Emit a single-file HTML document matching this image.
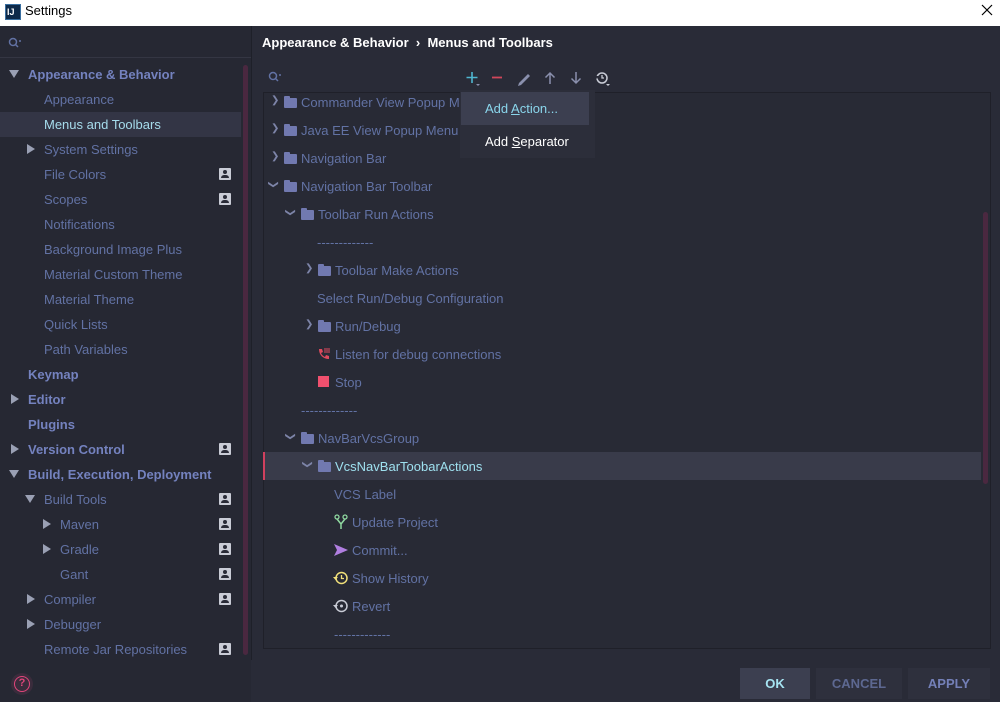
<!DOCTYPE html>
<html><head><meta charset="utf-8"><style>
*{margin:0;padding:0;box-sizing:border-box}
body{width:1000px;height:702px;background:#292b37;font-family:"Liberation Sans","Noto Sans CJK SC",sans-serif;font-size:13px;color:#6272a4;position:relative;overflow:hidden}
.a{position:absolute;white-space:nowrap;line-height:18px}
.b{font-weight:bold;color:#7482bf}
.ic{position:absolute;width:12px;height:12px;background:#c9ccd6;border-radius:1px}
.ic:before{content:"";position:absolute;left:4px;top:2px;width:4px;height:4px;border-radius:50%;background:#292b37}
.ic:after{content:"";position:absolute;left:2px;top:7px;width:8px;height:3px;border-radius:3px 3px 0 0;background:#292b37}
.tri{position:absolute;width:0;height:0}
.td{border-left:5px solid transparent;border-right:5px solid transparent;border-top:8px solid #9aa0b4}
.tr{border-top:5px solid transparent;border-bottom:5px solid transparent;border-left:8px solid #9aa0b4}
.fold{position:absolute;width:13px;height:10px;background:#7179b0;border-radius:1px}
.fold:before{content:"";position:absolute;left:0;top:-2px;width:6px;height:3px;background:#7179b0;border-radius:1px 1px 0 0}
.chev{position:absolute;color:#7d84a8;font-size:10px}
</style></head><body>
<div class="a" style="left:0;top:0;width:1000px;height:26px;background:#fff"></div>
<div class="a" style="left:5px;top:4px;width:16px;height:16px;background:#0e2a4a;border:1px solid #3a6fa0"></div>
<div class="a" style="left:7px;top:3px;color:#fff;font-size:9px;font-weight:bold">IJ</div>
<div class="a" style="left:25px;top:2px;color:#000;font-size:13px">Settings</div>
<svg class="a" style="left:981px;top:4px" width="12" height="12"><path d="M1 1l10 10M11 1L1 11" stroke="#000" stroke-width="1.2"/></svg>

<div class="a" style="left:0;top:26px;width:251px;height:676px;background:#262833"></div>
<div class="a" style="left:251px;top:26px;width:1px;height:634px;background:#1e2029"></div>
<div class="a" style="left:0;top:57px;width:251px;height:1px;background:#343643"></div>
<svg class="a" style="left:8px;top:37px" width="14" height="12"><circle cx="5" cy="5" r="3.5" stroke="#6272a4" stroke-width="1.5" fill="none"/><path d="M7.5 7.5L10 10M11 4l2 0" stroke="#6272a4" stroke-width="1.5"/></svg>
<div class="a" style="left:243px;top:65px;width:5px;height:590px;background:#4a2840;border-radius:3px"></div>
<div class="a" style="left:0;top:112px;width:241px;height:25px;background:#333545"></div>

<div class="tri td" style="left:9px;top:70px"></div><div class="a b" style="left:28px;top:66px">Appearance &amp; Behavior</div>
<div class="a" style="left:44px;top:91px">Appearance</div>
<div class="a" style="left:44px;top:116px;color:#a6dcec">Menus and Toolbars</div>
<div class="tri tr" style="left:27px;top:144px"></div><div class="a" style="left:44px;top:141px">System Settings</div>
<div class="a" style="left:44px;top:166px">File Colors</div><div class="ic" style="left:219px;top:168px"></div>
<div class="a" style="left:44px;top:191px">Scopes</div><div class="ic" style="left:219px;top:193px"></div>
<div class="a" style="left:44px;top:216px">Notifications</div>
<div class="a" style="left:44px;top:241px">Background Image Plus</div>
<div class="a" style="left:44px;top:266px">Material Custom Theme</div>
<div class="a" style="left:44px;top:291px">Material Theme</div>
<div class="a" style="left:44px;top:316px">Quick Lists</div>
<div class="a" style="left:44px;top:341px">Path Variables</div>
<div class="a b" style="left:28px;top:366px">Keymap</div>
<div class="tri tr" style="left:11px;top:394px"></div><div class="a b" style="left:28px;top:391px">Editor</div>
<div class="a b" style="left:28px;top:416px">Plugins</div>
<div class="tri tr" style="left:11px;top:444px"></div><div class="a b" style="left:28px;top:441px">Version Control</div><div class="ic" style="left:219px;top:443px"></div>
<div class="tri td" style="left:9px;top:470px"></div><div class="a b" style="left:28px;top:466px">Build, Execution, Deployment</div>
<div class="tri td" style="left:25px;top:495px"></div><div class="a" style="left:44px;top:491px">Build Tools</div><div class="ic" style="left:219px;top:493px"></div>
<div class="tri tr" style="left:43px;top:519px"></div><div class="a" style="left:60px;top:516px">Maven</div><div class="ic" style="left:219px;top:518px"></div>
<div class="tri tr" style="left:43px;top:544px"></div><div class="a" style="left:60px;top:541px">Gradle</div><div class="ic" style="left:219px;top:543px"></div>
<div class="a" style="left:60px;top:566px">Gant</div><div class="ic" style="left:219px;top:568px"></div>
<div class="tri tr" style="left:27px;top:594px"></div><div class="a" style="left:44px;top:591px">Compiler</div><div class="ic" style="left:219px;top:593px"></div>
<div class="tri tr" style="left:27px;top:619px"></div><div class="a" style="left:44px;top:616px">Debugger</div>
<div class="a" style="left:44px;top:641px">Remote Jar Repositories</div><div class="ic" style="left:219px;top:643px"></div>
<div class="a" style="left:11px;top:673px;width:22px;height:22px;border-radius:50%;background:#3a2c3c"></div>
<div class="a" style="left:14px;top:676px;width:16px;height:16px;border-radius:50%;border:1.5px solid #e0457b;color:#e0457b;font-size:11px;line-height:13px;text-align:center;font-weight:bold">?</div>

<div class="a" style="left:262px;top:34px;color:#fff;font-weight:bold">Appearance &amp; Behavior &nbsp;›&nbsp; Menus and Toolbars</div>
<svg class="a" style="left:268px;top:71px" width="14" height="12"><circle cx="5" cy="5" r="3.5" stroke="#6272a4" stroke-width="1.5" fill="none"/><path d="M7.5 7.5L10 10M11 4l2 0" stroke="#6272a4" stroke-width="1.5"/></svg>
<svg class="a" style="left:464px;top:70px" width="150" height="18">
<path d="M8 2v11M2.5 7.5h11" stroke="#4fb6d0" stroke-width="1.6"/><path d="M12 14l2 2 2-2z" fill="#8a90ad"/>
<path d="M28 7.5h10" stroke="#d0465a" stroke-width="1.8"/>
<path d="M55 13l9-9 2 2-9 9-3 1z" fill="#8a90ad"/>
<path d="M86 14V3M81.5 7.5L86 3l4.5 4.5" stroke="#8a90ad" stroke-width="1.5" fill="none"/>
<path d="M112 2v11M107.5 8.5L112 13l4.5-4.5" stroke="#8a90ad" stroke-width="1.5" fill="none"/>
<circle cx="138" cy="8" r="5" stroke="#c9ccd6" stroke-width="1.5" fill="none"/><path d="M138 5v3h2" stroke="#c9ccd6" stroke-width="1.3" fill="none"/><path d="M131 6l2 3 2-3z" fill="#292b37"/><path d="M142 14l2 2 2-2z" fill="#c9ccd6"/>
</svg>

<div class="a" style="left:263px;top:92px;width:728px;height:557px;border:1px solid #1f2029;background:#282a35"></div>
<div class="a" style="left:983px;top:212px;width:5px;height:272px;background:#4a2840;border-radius:3px"></div>
<div class="a" style="left:263px;top:452px;width:718px;height:28px;background:#393b4a"></div>
<div class="a" style="left:263px;top:452px;width:2px;height:28px;background:#d0405e"></div>

<div class="chev" style="left:271px;top:95px">❯</div><div class="fold" style="left:284px;top:98px"></div><div class="a" style="left:301px;top:94px">Commander View Popup M</div>
<div class="chev" style="left:271px;top:123px">❯</div><div class="fold" style="left:284px;top:126px"></div><div class="a" style="left:301px;top:122px">Java EE View Popup Menu</div>
<div class="chev" style="left:271px;top:151px">❯</div><div class="fold" style="left:284px;top:154px"></div><div class="a" style="left:301px;top:150px">Navigation Bar</div>
<div class="chev" style="left:269px;top:179px;transform:rotate(90deg)">❯</div><div class="fold" style="left:284px;top:182px"></div><div class="a" style="left:301px;top:178px">Navigation Bar Toolbar</div>
<div class="chev" style="left:286px;top:207px;transform:rotate(90deg)">❯</div><div class="fold" style="left:301px;top:210px"></div><div class="a" style="left:318px;top:206px">Toolbar Run Actions</div>
<div class="a" style="left:317px;top:234px">-------------</div>
<div class="chev" style="left:305px;top:263px">❯</div><div class="fold" style="left:318px;top:266px"></div><div class="a" style="left:335px;top:262px">Toolbar Make Actions</div>
<div class="a" style="left:317px;top:290px">Select Run/Debug Configuration</div>
<div class="chev" style="left:305px;top:319px">❯</div><div class="fold" style="left:318px;top:322px"></div><div class="a" style="left:335px;top:318px">Run/Debug</div>
<svg class="a" style="left:317px;top:347px" width="14" height="14"><path d="M2 2h3l1 3-2 1c1 2 2 3 4 4l1-2 3 1v3c-6 0-10-4-10-10z" fill="#e04a5e"/><path d="M8 1v5M10 1v5M12 1v5" stroke="#e04a5e" stroke-width="1"/></svg><div class="a" style="left:335px;top:346px">Listen for debug connections</div>
<div class="a" style="left:318px;top:376px;width:11px;height:11px;background:#f0506e"></div><div class="a" style="left:335px;top:374px">Stop</div>
<div class="a" style="left:301px;top:402px">-------------</div>
<div class="chev" style="left:286px;top:431px;transform:rotate(90deg)">❯</div><div class="fold" style="left:301px;top:434px"></div><div class="a" style="left:318px;top:430px">NavBarVcsGroup</div>
<div class="chev" style="left:303px;top:459px;transform:rotate(90deg)">❯</div><div class="fold" style="left:318px;top:462px"></div><div class="a" style="left:335px;top:458px;color:#9ee0ef">VcsNavBarToobarActions</div>
<div class="a" style="left:334px;top:486px">VCS Label</div>
<svg class="a" style="left:334px;top:514px" width="14" height="16"><circle cx="3" cy="3" r="2" fill="none" stroke="#8fd8a0" stroke-width="1.3"/><circle cx="11" cy="3" r="2" fill="none" stroke="#8fd8a0" stroke-width="1.3"/><path d="M3 5l4 5 4-5M7 10v5" stroke="#8fd8a0" stroke-width="1.5" fill="none"/></svg><div class="a" style="left:352px;top:514px">Update Project</div>
<svg class="a" style="left:333px;top:543px" width="16" height="14"><path d="M1 1l14 6-14 6 3-6z" fill="#b07ee0"/></svg><div class="a" style="left:352px;top:542px">Commit...</div>
<svg class="a" style="left:333px;top:570px" width="16" height="16"><circle cx="8.5" cy="8" r="5.5" stroke="#f1e07a" stroke-width="1.5" fill="none"/><path d="M8.5 5v3.5h2.5" stroke="#f1e07a" stroke-width="1.3" fill="none"/><path d="M0 7h5l-2.5 3z" fill="#f1e07a"/></svg><div class="a" style="left:352px;top:570px">Show History</div>
<svg class="a" style="left:333px;top:598px" width="16" height="16"><circle cx="8.5" cy="8" r="5.5" stroke="#c9ccd6" stroke-width="1.5" fill="none"/><circle cx="8.5" cy="8" r="1.5" fill="#c9ccd6"/><path d="M0 7h5l-2.5 3z" fill="#c9ccd6"/></svg><div class="a" style="left:352px;top:598px">Revert</div>
<div class="a" style="left:334px;top:626px">-------------</div>

<div class="a" style="left:460px;top:90px;width:135px;height:68px;background:#2c2e3a"></div>
<div class="a" style="left:461px;top:92px;width:128px;height:33px;background:#3c3f50"></div>
<div class="a" style="left:485px;top:100px;color:#8ad6ec">Add <u>A</u>ction...</div>
<div class="a" style="left:485px;top:133px;color:#fff">Add <u>S</u>eparator</div>

<div class="a" style="left:740px;top:668px;width:70px;height:31px;background:#3c3f50;color:#a6e4f2;font-weight:bold;text-align:center;line-height:31px">OK</div>
<div class="a" style="left:816px;top:668px;width:86px;height:31px;background:#2e303d;color:#5d6891;font-weight:bold;text-align:center;line-height:31px">CANCEL</div>
<div class="a" style="left:908px;top:668px;width:82px;height:31px;background:#2e303d;color:#7480b8;font-weight:bold;text-align:center;line-height:31px">APPLY</div>
</body></html>
